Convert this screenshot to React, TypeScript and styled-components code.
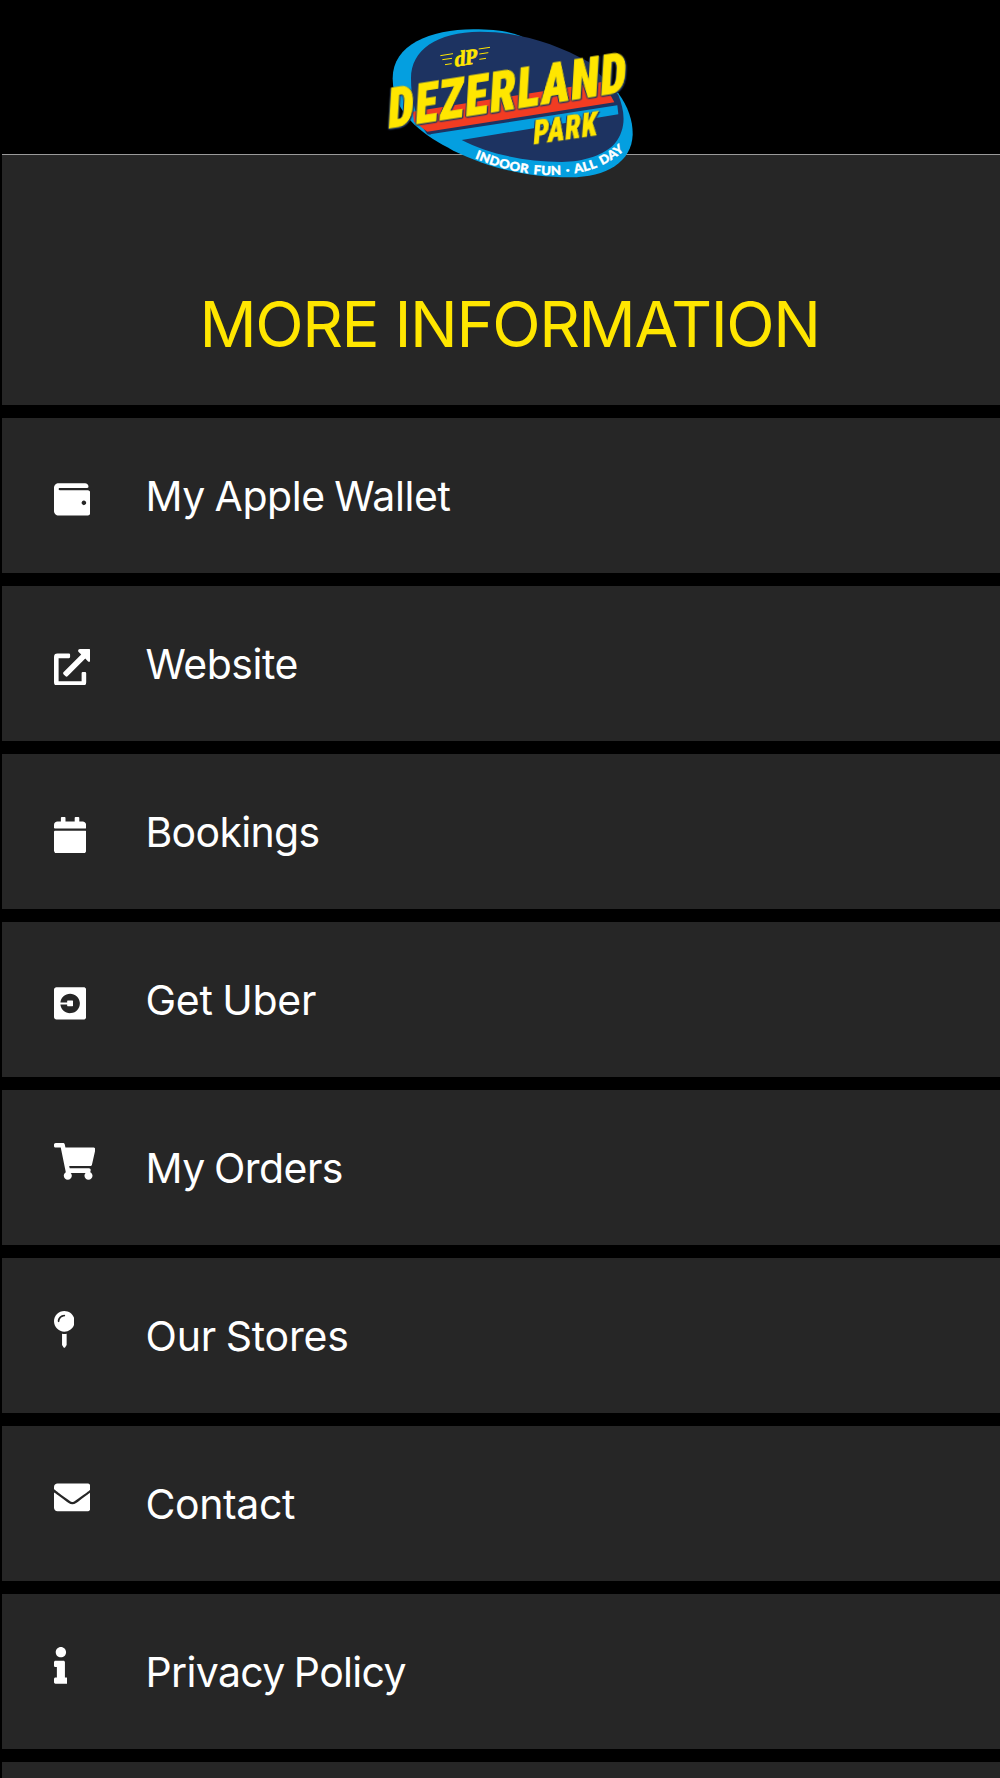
import React from 'react';
import styled, { createGlobalStyle } from 'styled-components';
import type { IconType } from 'react-icons';
import {
  FaWallet,
  FaExternalLinkAlt,
  FaCalendar,
  FaUber,
  FaShoppingCart,
  FaMapPin,
  FaEnvelope,
  FaInfo,
} from 'react-icons/fa';

const NAVY = '#1d3361';
const SKY = '#049fe0';
const RED = '#f23c22';
const YELLOW = '#ffe600';
const PANEL = '#262626';

const GlobalStyle = createGlobalStyle`
  * { box-sizing: border-box; }
  html, body { margin: 0; background: #000; }
  body { overflow: hidden; }
`;

const Screen = styled.div`
  height: 1778px;
  padding-left: 2px;
  overflow: hidden;
  background: #000;
  color: #fff;
  font-family: Inter, 'Liberation Sans', sans-serif;
  display: flex;
  flex-direction: column;
`;

const Header = styled.header`
  flex: none;
  height: 155px;
  padding: 15px 0 0 368px;
  background: #000;
  border-bottom: 1px solid #9a9a9a;
`;

const LogoArt = styled.svg`
  display: block;
  position: relative;
  z-index: 1;
  width: 280px;
  height: 180px;
  overflow: visible;
`;

const Wordmark = styled.text<{ $size: number }>`
  font-family: Roboto, 'Liberation Sans', sans-serif;
  font-weight: 900;
  font-size: ${(p) => p.$size}px;
  font-stretch: 75%;
  letter-spacing: ${(p) => p.$size / 28}px;
  fill: ${YELLOW};
  stroke: ${YELLOW};
  stroke-width: ${(p) => p.$size / 60}px;
  filter: drop-shadow(4px 3px 0 ${NAVY}) drop-shadow(-3px 1px 0 ${NAVY});
`;

const Monogram = styled.text`
  font-family: 'Liberation Serif', serif;
  font-weight: 700;
  font-size: 66px;
  fill: ${YELLOW};
  stroke: ${YELLOW};
  stroke-width: 2px;
`;

const Tagline = styled.text`
  font-family: Lato, 'Liberation Sans', sans-serif;
  font-weight: 900;
  font-size: 37px;
  letter-spacing: 1px;
  word-spacing: 4px;
  fill: #fff;
  stroke: #fff;
  stroke-width: 1.2px;
`;

const TitlePanel = styled.section`
  flex: none;
  height: 250px;
  padding-top: 131px;
  background: ${PANEL};
  text-align: center;
`;

const Title = styled.h1`
  margin: 0;
  padding-left: 17px;
  color: ${YELLOW};
  font-size: 63.3px;
  line-height: 76px;
  font-weight: 400;
  letter-spacing: -1.42px;
  white-space: nowrap;
`;

const Menu = styled.nav`
  display: flex;
  flex-direction: column;
  gap: 13px;
  padding-top: 13px;
`;

const Row = styled.a`
  flex: none;
  display: flex;
  align-items: flex-start;
  height: 155px;
  padding: 52.5px 0 0 51.7px;
  background: ${PANEL};
`;

const IconSlot = styled.span<{ $raised?: boolean; $units: number }>`
  flex: none;
  width: 91.8px;
  padding-top: ${(p) => (p.$raised ? 0.3 : 10.2)}px;

  svg {
    display: block;
    height: 36.8px;
    width: ${(p) => (p.$units / 512) * 36.8}px;
  }
`;

const Label = styled.span<{ $spacing: number }>`
  font-size: 41px;
  line-height: 50px;
  letter-spacing: ${(p) => p.$spacing}px;
  word-spacing: -1.6px;
  white-space: nowrap;
`;

interface Item {
  label: string;
  icon: IconType;
  units: number;
  raised?: boolean;
  spacing: number;
}

const items: Item[] = [
  { label: 'My Apple Wallet', icon: FaWallet, units: 512, spacing: -0.4 },
  { label: 'Website', icon: FaExternalLinkAlt, units: 512, spacing: -0.5 },
  { label: 'Bookings', icon: FaCalendar, units: 448, spacing: -0.7 },
  { label: 'Get Uber', icon: FaUber, units: 448, spacing: -0.28 },
  { label: 'My Orders', icon: FaShoppingCart, units: 576, raised: true, spacing: -0.56 },
  { label: 'Our Stores', icon: FaMapPin, units: 288, raised: true, spacing: -0.2 },
  { label: 'Contact', icon: FaEnvelope, units: 512, raised: true, spacing: -0.4 },
  { label: 'Privacy Policy', icon: FaInfo, units: 192, raised: true, spacing: -0.66 },
];

const Logo = () => (
  <LogoArt viewBox="0 0 840 540" role="img" aria-label="Dezerland Park">
    <path
      fill={SKY}
      d="M68 190C68 90 180 43 310 43C370 43 410 48 450 62L650 160L745 235C775 275 789 320 788 360C785 440 710 487 600 487C460 487 350 455 250 407C205 383 168 362 132 328C95 290 68 250 68 190Z"
    />
    <path
      fill={NAVY}
      d="M123 190C123 105 200 51 330 50C450 50 560 88 655 140L745 240C765 290 770 340 735 385C705 420 640 441 575 441C460 440 350 415 275 375L172 358C135 310 123 250 123 190Z"
    />
    <path fill={SKY} d="M180 358L742 271L745 298L275 375L262 405Z" />
    <path fill={RED} d="M128 290L700 200L733 262L172 350L132 320Z" />
    <path
      stroke={YELLOW}
      strokeWidth="3"
      fill="none"
      d="M211 122L249 116M217 134L246 130M225 149L245 146M326 102L360 97M328 117L355 113M328 133L348 130"
    />
    <Monogram transform="matrix(1 -0.15 -0.06 1 252 155)" textLength="69" lengthAdjust="spacingAndGlyphs">
      dP
    </Monogram>
    <Wordmark $size={165} transform="matrix(1 -0.155 -0.06 1 51 340)" textLength="720" lengthAdjust="spacingAndGlyphs">
      DEZERLAND
    </Wordmark>
    <Wordmark $size={98} transform="matrix(1 -0.145 -0.08 1 488 388)" textLength="193" lengthAdjust="spacingAndGlyphs">
      PARK
    </Wordmark>
    <path id="logo-tagline" fill="none" d="M314 430C400 466 470 477 530 480C620 481 700 465 768 402" />
    <Tagline textLength="475" lengthAdjust="spacingAndGlyphs">
      <textPath href="#logo-tagline">INDOOR FUN · ALL DAY</textPath>
    </Tagline>
  </LogoArt>
);

export default function App() {
  return (
    <>
      <GlobalStyle />
      <Screen>
        <Header>
          <Logo />
        </Header>
        <TitlePanel>
          <Title>MORE INFORMATION</Title>
        </TitlePanel>
        <Menu>
          {items.map(({ label, icon: Icon, units, raised, spacing }) => (
            <Row key={label}>
              <IconSlot $raised={raised} $units={units}>
                <Icon />
              </IconSlot>
              <Label $spacing={spacing}>{label}</Label>
            </Row>
          ))}
          <Row />
        </Menu>
      </Screen>
    </>
  );
}
